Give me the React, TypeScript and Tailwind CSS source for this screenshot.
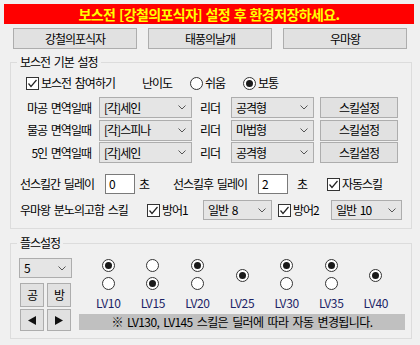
import React from "react";

function Check({ label, w }: { label: string; w?: string }) {
  return (
    <div className={`flex items-center ${w ?? ""}`}>
      <span className="w-[13px] h-[13px] border border-[#333] bg-white flex items-center justify-center shrink-0">
        <svg width="11" height="11" viewBox="0 0 11 11">
          <polyline points="1.5,5.5 4,8.5 9.5,2" fill="none" stroke="#222" strokeWidth="1.2" />
        </svg>
      </span>
      <span className="ml-[2px]">{label}</span>
    </div>
  );
}

function Radio({ on, className }: { on?: boolean; className?: string }) {
  return (
    <span className={`w-[13px] h-[13px] rounded-full border border-[#333] bg-white flex items-center justify-center shrink-0 ${className ?? ""}`}>
      {on && <span className="w-[7px] h-[7px] rounded-full bg-[#1a1a1a]" />}
    </span>
  );
}

function Combo({ value, w, h = "h-[21px]" }: { value: string; w: string; h?: string }) {
  return (
    <div className={`${w} ${h} border border-[#adadad] bg-[#e5e5e5] flex items-center justify-between pl-[4px] pr-[5px] shrink-0`}>
      <span>{value}</span>
      <svg width="8" height="5" viewBox="0 0 8 5">
        <polyline points="0.5,0.5 4,4 7.5,0.5" fill="none" stroke="#555" strokeWidth="1" />
      </svg>
    </div>
  );
}

function Btn({ children, className }: { children: React.ReactNode; className: string }) {
  return (
    <div className={`border border-[#adadad] bg-[#e1e1e1] flex items-center justify-center shrink-0 ${className}`}>
      {children}
    </div>
  );
}

function Field({ value, w }: { value: string; w: string }) {
  return (
    <div className={`${w} h-[20px] border border-[#7a7a7a] bg-white flex items-center pl-[3px] shrink-0`}>{value}</div>
  );
}

const rows = [
  { label: "마공 면역일때", dealer: "[각]세인", leader: "공격형" },
  { label: "물공 면역일때", dealer: "[각]스피나", leader: "마법형" },
  { label: "5인 면역일때", dealer: "[각]세인", leader: "공격형" },
];

// [top, bottom] radio state; single = one centered radio
const levels: { lv: string; top?: boolean; bottom?: boolean; single?: boolean }[] = [
  { lv: "LV10", top: true, bottom: false },
  { lv: "LV15", top: false, bottom: true },
  { lv: "LV20", top: true, bottom: false },
  { lv: "LV25", single: true },
  { lv: "LV30", top: true, bottom: false },
  { lv: "LV35", top: true, bottom: false },
  { lv: "LV40", single: true },
];

export default function App() {
  return (
    <div className="w-[420px] h-[345px] bg-[#f0f0f0] text-black text-[12px] leading-[14px] tracking-[-1px] [word-spacing:2px] font-['Noto_Sans_CJK_KR','Liberation_Sans',sans-serif] pt-[4px] overflow-hidden">
      <div className="ml-[4px] w-[410px] h-[20px] bg-[#ff0000] text-[#ffff00] font-bold text-[14px] tracking-[-0.6px] [word-spacing:1px] flex items-center justify-center">
        보스전 [강철의포식자] 설정 후 환경저장하세요.
      </div>

      <div className="flex pl-[13px] gap-[11px] mt-[4px]">
        <Btn className="w-[124px] h-[21px]">강철의포식자</Btn>
        <Btn className="w-[124px] h-[21px]">태풍의날개</Btn>
        <Btn className="w-[124px] h-[21px]">우마왕</Btn>
      </div>

      <fieldset className="ml-[10px] w-[402px] h-[174px] mt-[6px] border border-[#dcdcdc]">
        <legend className="ml-[6px] px-[3px] leading-[14px]">보스전 기본 설정</legend>

        <div className="flex items-center h-[20px] mt-[4px] pl-[15px]">
          <Check label="보스전 참여하기" w="w-[116px]" />
          <span className="w-[48px]">난이도</span>
          <div className="flex items-center w-[53px]">
            <Radio />
            <span className="ml-[2px]">쉬움</span>
          </div>
          <div className="flex items-center">
            <Radio on />
            <span className="ml-[2px]">보통</span>
          </div>
        </div>

        <div className="flex flex-col gap-[1.5px] mt-[4px]">
          {rows.map((r, i) => (
            <div key={i} className="flex items-center">
              <span className="w-[80px] text-right">{r.label}</span>
              <div className="ml-[8px]">
                <Combo value={r.dealer} w="w-[93px]" />
              </div>
              <span className="ml-[8px] w-[31px]">리더</span>
              <Combo value={r.leader} w="w-[83px]" />
              <Btn className="ml-[6px] w-[78px] h-[21px]">스킬설정</Btn>
            </div>
          ))}
        </div>

        <div className="flex items-center pl-[9px] mt-[11px]">
          <span className="w-[85px]">선스킬간 딜레이</span>
          <Field value="0" w="w-[30px]" />
          <span className="ml-[4px] w-[34px]">초</span>
          <span className="w-[85px]">선스킬후 딜레이</span>
          <Field value="2" w="w-[30px]" />
          <span className="ml-[9px] w-[30px]">초</span>
          <Check label="자동스킬" />
        </div>

        <div className="flex items-center pl-[9px] mt-[6px]">
          <span className="w-[127px]">우마왕 분노의고함 스킬</span>
          <Check label="방어1" w="w-[56px]" />
          <Combo value="일반 8" w="w-[69px]" h="h-[20px]" />
          <div className="ml-[6px]">
            <Check label="방어2" w="w-[53px]" />
          </div>
          <Combo value="일반 10" w="w-[71px]" h="h-[20px]" />
        </div>
      </fieldset>

      <fieldset className="ml-[10px] w-[402px] h-[103px] mt-[7px] border border-[#dcdcdc]">
        <legend className="ml-[6px] px-[3px] leading-[14px]">플스설정</legend>

        <div className="flex mt-[8px]">
          <div className="ml-[8px] w-[53px] flex flex-col">
            <Combo value="5" w="w-[53px]" h="h-[20px]" />
            <div className="ml-[1px] mt-[5px] grid grid-cols-2 gap-x-[3px] gap-y-[2px] w-[51px]">
              <Btn className="h-[24px]">공</Btn>
              <Btn className="h-[24px]">방</Btn>
              <Btn className="h-[22px]">
                <svg width="8" height="9" viewBox="0 0 8 9"><polygon points="8,0 8,9 0,4.5" fill="#111" /></svg>
              </Btn>
              <Btn className="h-[22px]">
                <svg width="8" height="9" viewBox="0 0 8 9"><polygon points="0,0 0,9 8,4.5" fill="#111" /></svg>
              </Btn>
            </div>
          </div>

          <div className="ml-[7px] w-[326px] flex flex-col">
            <div className="flex pl-[7px]">
              {levels.map((l) => (
                <div key={l.lv} className="w-[44.6px] flex flex-col items-center">
                  <div className="h-[38px] flex flex-col items-center">
                    {l.single ? (
                      <Radio on className="mt-[11px]" />
                    ) : (
                      <>
                        <Radio on={l.top} className="mt-[1px]" />
                        <Radio on={l.bottom} className="mt-[5px]" />
                      </>
                    )}
                  </div>
                  <span className="text-[#1c2466] tracking-[-0.3px]">{l.lv}</span>
                </div>
              ))}
            </div>
            <div className="mt-[4px] h-[16px] bg-[#c0c0c0] flex items-center justify-center tracking-[-0.6px]">
              ※ LV130, LV145 스킬은 딜러에 따라 자동 변경됩니다.
            </div>
          </div>
        </div>
      </fieldset>
    </div>
  );
}
